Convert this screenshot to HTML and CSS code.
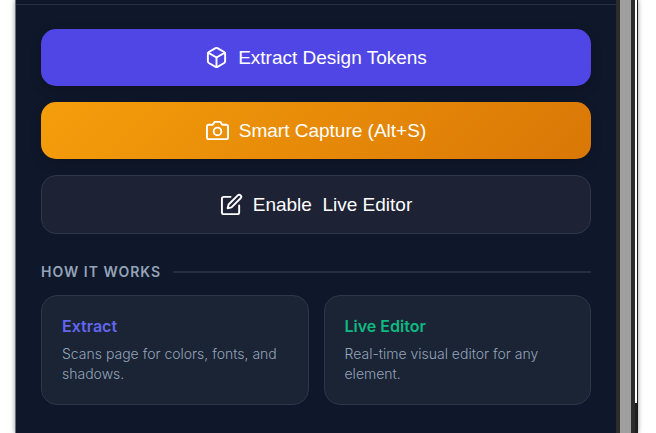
FILE: index.html
```
<!DOCTYPE html>
<html lang="en">
<head>
    <meta charset="UTF-8">
    <meta name="viewport" content="width=device-width, initial-scale=1.0">
    <title>Design Token Extractor</title>
    <link rel="stylesheet" href="styles.css">
</head>
<body>

<div class="popup">
    <div class="panel">
        <header class="header"></header>

        <main class="content">
            <div class="actions">
                <button type="button" class="btn btn-primary">
                    <svg class="icon" viewBox="0 0 24 24">
                        <path d="M21 16V8a2 2 0 0 0-1-1.73l-7-4a2 2 0 0 0-2 0l-7 4A2 2 0 0 0 3 8v8a2 2 0 0 0 1 1.73l7 4a2 2 0 0 0 2 0l7-4A2 2 0 0 0 21 16z"/>
                        <polyline points="3.27 6.96 12 12.01 20.73 6.96"/>
                        <line x1="12" y1="22.08" x2="12" y2="12"/>
                    </svg>
                    <span>Extract Design Tokens</span>
                </button>
                <button type="button" class="btn btn-capture">
                    <svg class="icon" viewBox="0 0 24 24">
                        <path d="M23 19a2 2 0 0 1-2 2H3a2 2 0 0 1-2-2V8a2 2 0 0 1 2-2h4l2-3h6l2 3h4a2 2 0 0 1 2 2z"/>
                        <circle cx="12" cy="13" r="4"/>
                    </svg>
                    <span>Smart Capture (Alt+S)</span>
                </button>
                <button type="button" class="btn btn-secondary">
                    <svg class="icon" viewBox="0 0 24 24">
                        <path d="M11 4H4a2 2 0 0 0-2 2v14a2 2 0 0 0 2 2h14a2 2 0 0 0 2-2v-7"/>
                        <path d="M18.5 2.5a2.121 2.121 0 0 1 3 3L12 15l-4 1 1-4 9.5-9.5z"/>
                    </svg>
                    <span>Enable&nbsp; Live Editor</span>
                </button>
            </div>

            <h2 class="section-title">How it works</h2>

            <div class="cards">
                <div class="card">
                    <h3 class="card-title extract">Extract</h3>
                    <p>Scans page for colors, fonts, and shadows.</p>
                </div>
                <div class="card">
                    <h3 class="card-title editor">Live Editor</h3>
                    <p>Real-time visual editor for any element.</p>
                </div>
            </div>
        </main>
    </div>

    <div class="scrollbar"><div class="thumb"></div></div>
    <div class="outer-scrollbar"><div class="outer-thumb"></div></div>
</div>

</body>
</html>
```
FILE: styles.css
```
* {
    box-sizing: border-box;
}
body {
    margin: 0;
    background-color: #fff;
    font-family: Inter, 'Liberation Sans', sans-serif;
    overflow: hidden;
}
.popup {
    display: flex;
    min-height: 100vh;
    margin: 0 18px 0 15px;
    border-left: 1px solid #6b6f78;
    border-right: 1px solid #1a1a1a;
    box-shadow: 0 0 5px rgba(0, 0, 0, 0.4);
}
.panel {
    flex: 1;
    background-color: #0f172a;
}
.header {
    height: 5px;
    border-bottom: 1px solid #263040;
}
.content {
    padding: 24px 25px;
}

/* Buttons */
.actions {
    display: flex;
    flex-direction: column;
    gap: 16px;
}
.btn {
    display: flex;
    align-items: center;
    justify-content: center;
    gap: 10px;
    width: 100%;
    padding: 17px;
    border: none;
    border-radius: 15px;
    color: #fff;
    font-family: 'Liberation Sans', Arial, sans-serif;
    font-size: 19px;
    line-height: 22px;
    cursor: pointer;
}
.btn-primary {
    background-color: #4f46e5;
    box-shadow: 0 4px 12px rgba(0, 0, 0, 0.2);
}
.btn-capture {
    background: linear-gradient(135deg, #f59e0b, #d97706);
    box-shadow: 0 4px 12px rgba(0, 0, 0, 0.2);
}
.btn-secondary {
    background-color: #1e2235;
    border: 1px solid #2f374a;
}
.icon {
    width: 23px;
    height: 23px;
    fill: none;
    stroke: currentColor;
    stroke-width: 2;
    stroke-linecap: round;
    stroke-linejoin: round;
}

/* How it works */
.section-title {
    display: flex;
    align-items: center;
    gap: 12px;
    margin: 30px 0 15px;
    color: #94a3b8;
    font-size: 14px;
    font-weight: 600;
    line-height: 16px;
    letter-spacing: 1px;
    text-transform: uppercase;
}
.section-title::after {
    content: "";
    flex: 1;
    height: 2px;
    background-color: #252e3f;
}
.cards {
    display: grid;
    grid-template-columns: 1fr 1fr;
    gap: 15px;
}
.card {
    padding: 20px;
    background-color: #1a2435;
    border: 1px solid #2d3748;
    border-radius: 16px;
}
.card-title {
    margin: 0 0 8px;
    font-size: 16px;
    font-weight: 600;
    line-height: 20px;
}
.extract {
    color: #6366f1;
}
.editor {
    color: #10b981;
}
.card p {
    margin: 0;
    color: #94a3b8;
    font-size: 14px;
    font-weight: 300;
    line-height: 20px;
}

/* Scrollbars */
.scrollbar {
    width: 19px;
    padding: 0 4px;
    background-color: #2c2c2c;
}
.thumb {
    height: 100%;
    background-color: #9f9f9f;
}
.outer-scrollbar {
    width: 2px;
    background-color: #1f1f1f;
}
.outer-thumb {
    height: 93%;
    background-color: #fff;
}
```
